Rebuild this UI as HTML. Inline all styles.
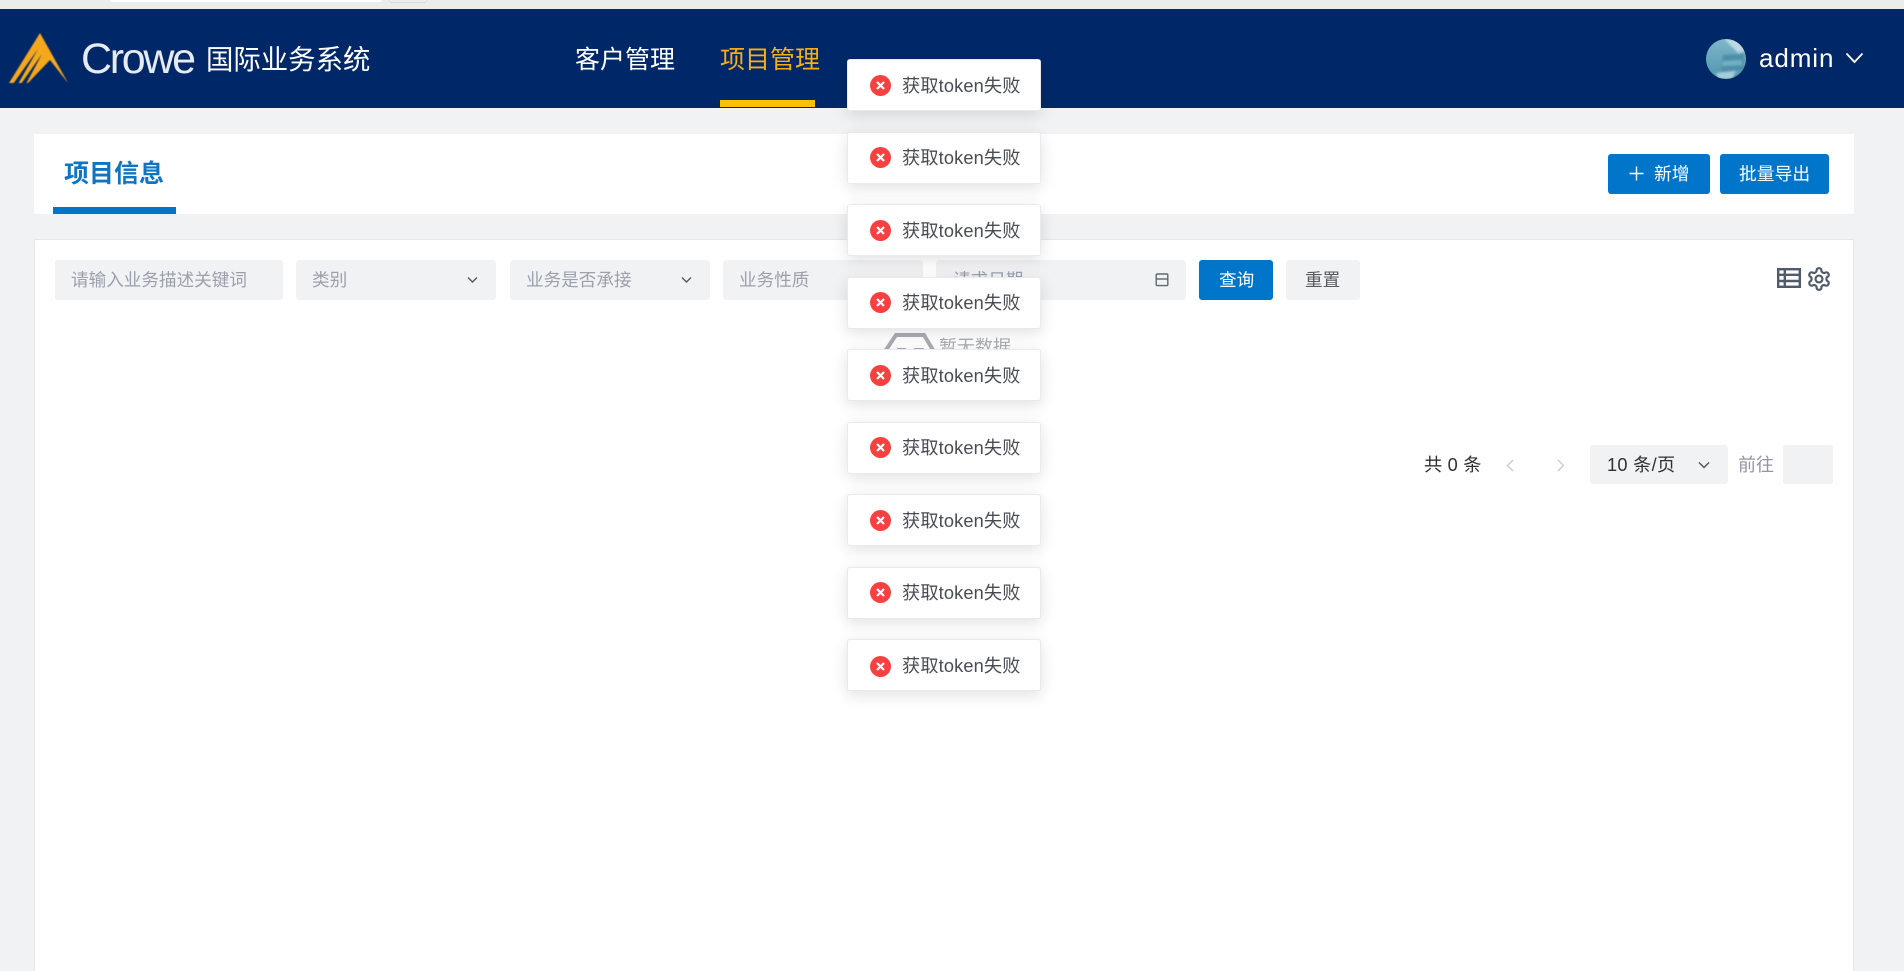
<!DOCTYPE html>
<html lang="zh">
<head>
<meta charset="utf-8">
<title>项目管理</title>
<style>
*{box-sizing:border-box;margin:0;padding:0}
html,body{width:1904px;height:971px;overflow:hidden;background:#f1f2f4;font-family:"Liberation Sans","Noto Sans CJK SC",sans-serif;color:#303133}
#root{position:relative;width:1904px;height:971px;overflow:hidden;background:#f1f2f4}
.abs{position:absolute}
.t{position:absolute;white-space:nowrap;line-height:1}
#strip{left:0;top:0;width:1904px;height:9px;background:#ececec}
#header{left:0;top:9px;width:1904px;height:99px;background:#002868}
#panel{left:34px;top:134px;width:1820px;height:80px;background:#fff}
#card{left:34px;top:239px;width:1820px;height:732px;background:#fff;border:1px solid #e4e7ed;border-bottom:0;border-radius:2px 2px 0 0}
.f{position:absolute;top:260px;height:40px;background:#f1f2f4;border-radius:3px}
.ph{color:#9aa1ac;font-size:17.6px;top:272px}
.btn{position:absolute;top:154px;height:40px;background:#0075c9;border-radius:3px}
.toast{position:absolute;left:847px;width:194px;height:52px;background:#fff;border:1px solid #e8eaf0;border-radius:3px;box-shadow:0 4px 16px rgba(0,0,0,.12)}
.toast svg{position:absolute;left:22px;top:15px}
.toast span{position:absolute;left:54px;top:16px;font-size:18.2px;letter-spacing:.15px;line-height:20px;color:#484c54;white-space:nowrap}
.up svg{top:14px}
.up span{top:15px}
</style>
</head>
<body>
<div id="root">
<div class="abs" id="strip"></div>
<div class="abs" style="left:110px;top:0;width:272px;height:2px;background:#fff;border-radius:0 0 3px 3px"></div>
<div class="abs" style="left:389px;top:-3px;width:38px;height:6px;border:1px solid #ddd;border-radius:3px"></div>
<div class="abs" id="header"></div>

<svg class="abs" style="left:8px;top:32px;filter:blur(.4px)" width="62" height="54" viewBox="0 0 62 54">
<path d="M1 51 L32 1 L60 51 L42 28 L20 51 Z" fill="#f5a81c"/>
<path d="M5 52 L30 17 L10 52 Z" fill="#002868"/>
<path d="M13 52 L34 22 L18 52 Z" fill="#002868"/>
</svg>
<div class="t" style="left:81px;top:38px;font-size:43px;letter-spacing:-2.3px;color:#e6eaf2;font-weight:400">Crowe</div>
<div class="t" style="left:206px;top:46px;font-size:27.4px;color:#fff">国际业务系统</div>
<div class="t" style="left:575px;top:48px;font-size:25px;color:#fff">客户管理</div>
<div class="t" style="left:720px;top:48px;font-size:25px;color:#f8ae14">项目管理</div>
<div class="abs" style="left:720px;top:100px;width:95px;height:7px;background:#fcc000"></div>

<svg class="abs" style="left:1706px;top:39px" width="40" height="40" viewBox="0 0 40 40">
<defs><clipPath id="av"><circle cx="20" cy="20" r="20"/></clipPath>
<linearGradient id="ag" x1="0" y1="0" x2="0" y2="1"><stop offset="0" stop-color="#7fb6c8"/><stop offset="1" stop-color="#4f97ae"/></linearGradient>
<filter id="bl"><feGaussianBlur stdDeviation="1"/></filter></defs>
<g clip-path="url(#av)">
<rect width="40" height="40" fill="url(#ag)"/>
<g filter="url(#bl)">
<path d="M18 0 L40 0 L40 12 L32 14 L24 6 Z" fill="#bcd8e2"/>
<path d="M17 16 L38 15 L38 31 L15 33 Z" fill="#4d8ea8"/>
<path d="M17 22 L36 21 L36 26 L16 27 Z" fill="#72b0c6"/>
<path d="M10 34 L30 32 L26 40 L12 40 Z" fill="#a6cdd8"/>
</g>
</g>
</svg>
<div class="t" style="left:1759px;top:45px;font-size:26px;letter-spacing:.9px;color:#fff">admin</div>
<svg class="abs" style="left:1845px;top:52px" width="19" height="12" viewBox="0 0 19 12"><path d="M1.5 1.5 L9.5 10 L17.5 1.5" fill="none" stroke="#fff" stroke-width="1.8"/></svg>

<div class="abs" id="panel"></div>
<div class="t" style="left:64px;top:162px;font-size:25px;font-weight:700;color:#0d74c6">项目信息</div>
<div class="abs" style="left:53px;top:207px;width:123px;height:7px;background:#0075c9"></div>

<div class="btn" style="left:1608px;width:102px"></div>
<svg class="abs" style="left:1629px;top:166px" width="15" height="15" viewBox="0 0 15 15"><path d="M7.5 0.5V14.5M0.5 7.5H14.5" stroke="#fff" stroke-width="1.4"/></svg>
<div class="t" style="left:1654px;top:166px;font-size:17.8px;color:#fff">新增</div>
<div class="btn" style="left:1720px;width:109px"></div>
<div class="t" style="left:1739px;top:166px;font-size:17.8px;color:#fff">批量导出</div>

<div class="abs" id="card"></div>

<div class="f" style="left:55px;width:228px"></div>
<div class="t ph" style="left:71px">请输入业务描述关键词</div>
<div class="f" style="left:296px;width:200px"></div>
<div class="t ph" style="left:312px">类别</div>
<svg class="abs" style="left:467px;top:276px" width="11" height="8" viewBox="0 0 11 8"><path d="M1 1.5 L5.5 6 L10 1.5" fill="none" stroke="#4f5866" stroke-width="1.4"/></svg>
<div class="f" style="left:510px;width:200px"></div>
<div class="t ph" style="left:526px">业务是否承接</div>
<svg class="abs" style="left:681px;top:276px" width="11" height="8" viewBox="0 0 11 8"><path d="M1 1.5 L5.5 6 L10 1.5" fill="none" stroke="#4f5866" stroke-width="1.4"/></svg>
<div class="f" style="left:723px;width:200px"></div>
<div class="t ph" style="left:739px">业务性质</div>
<div class="f" style="left:936px;width:250px"></div>
<div class="t ph" style="left:953px">请求日期</div>
<svg class="abs" style="left:1155px;top:272px" width="14" height="15" viewBox="0 0 14 15"><rect x="1.2" y="2" width="11.6" height="11.6" rx="1" fill="none" stroke="#5f6775" stroke-width="1.4"/><path d="M1.2 7H12.8" stroke="#5f6775" stroke-width="1.4"/></svg>
<div class="abs" style="left:1199px;top:260px;width:74px;height:40px;background:#0075c9;border-radius:3px"></div>
<div class="t" style="left:1219px;top:272px;font-size:17.6px;color:#fff">查询</div>
<div class="f" style="left:1286px;width:74px"></div>
<div class="t" style="left:1305px;top:272px;font-size:17.6px;color:#55595f">重置</div>

<svg class="abs" style="left:1777px;top:268px" width="24" height="20" viewBox="0 0 24 20"><rect x="1.2" y="1.2" width="21.6" height="17.6" fill="none" stroke="#4f5b6b" stroke-width="2.4"/><path d="M1 6.8H23M1 13H23M7.8 1V19" stroke="#4f5b6b" stroke-width="2.4" fill="none"/></svg>
<svg class="abs" style="left:1806px;top:266px" width="26" height="26" viewBox="0 0 24 24" fill="none" stroke="#4f5b6b" stroke-width="2"><path d="M12.22 2h-.44a2 2 0 0 0-2 2v.18a2 2 0 0 1-1 1.73l-.43.25a2 2 0 0 1-2 0l-.15-.08a2 2 0 0 0-2.73.73l-.22.38a2 2 0 0 0 .73 2.73l.15.1a2 2 0 0 1 1 1.72v.51a2 2 0 0 1-1 1.74l-.15.09a2 2 0 0 0-.73 2.73l.22.38a2 2 0 0 0 2.73.73l.15-.08a2 2 0 0 1 2 0l.43.25a2 2 0 0 1 1 1.73V20a2 2 0 0 0 2 2h.44a2 2 0 0 0 2-2v-.18a2 2 0 0 1 1-1.73l.43-.25a2 2 0 0 1 2 0l.15.08a2 2 0 0 0 2.73-.73l.22-.39a2 2 0 0 0-.73-2.73l-.15-.08a2 2 0 0 1-1-1.74v-.5a2 2 0 0 1 1-1.74l.15-.09a2 2 0 0 0 .73-2.73l-.22-.38a2 2 0 0 0-2.73-.73l-.15.08a2 2 0 0 1-2 0l-.43-.25a2 2 0 0 1-1-1.73V4a2 2 0 0 0-2-2z"/><circle cx="12" cy="12" r="3.2"/></svg>

<svg class="abs" style="left:882px;top:328px" width="56" height="24" viewBox="0 0 56 24"><path d="M4 22 L14 7 L42 7 L51 22" fill="none" stroke="#a9adb5" stroke-width="4"/><path d="M15 21H24M32 21H42" stroke="#a9adb5" stroke-width="2"/></svg>
<div class="t" style="left:939px;top:338px;font-size:18px;color:#a9adb5">暂无数据</div>

<div class="t" style="left:1424px;top:456px;font-size:18.2px;letter-spacing:.2px;color:#303133">共 0 条</div>
<svg class="abs" style="left:1505px;top:458px" width="10" height="15" viewBox="0 0 10 15"><path d="M8 2 L2.5 7.5 L8 13" fill="none" stroke="#c8ccd3" stroke-width="1.4"/></svg>
<svg class="abs" style="left:1556px;top:458px" width="10" height="15" viewBox="0 0 10 15"><path d="M2 2 L7.5 7.5 L2 13" fill="none" stroke="#c8ccd3" stroke-width="1.4"/></svg>
<div class="abs" style="left:1590px;top:445px;width:138px;height:39px;background:#f1f2f4;border-radius:3px"></div>
<div class="t" style="left:1607px;top:456px;font-size:18.2px;letter-spacing:.3px;color:#303133">10 条/页</div>
<svg class="abs" style="left:1698px;top:461px" width="12" height="8" viewBox="0 0 12 8"><path d="M1 1.5 L6 6.5 L11 1.5" fill="none" stroke="#4f5866" stroke-width="1.5"/></svg>
<div class="t" style="left:1738px;top:456px;font-size:18px;color:#8f96a3">前往</div>
<div class="abs" style="left:1783px;top:445px;width:50px;height:39px;background:#f1f2f4;border-radius:3px"></div>

<div class="toast" style="top:59px"><svg width="21" height="21" viewBox="0 0 21 21"><circle cx="10.5" cy="10.5" r="10.5" fill="#f74141"/><path d="M7 7L14 14M14 7L7 14" stroke="#fff" stroke-width="2.2"/></svg><span>获取token失败</span></div>
<div class="toast up" style="top:132px"><svg width="21" height="21" viewBox="0 0 21 21"><circle cx="10.5" cy="10.5" r="10.5" fill="#f74141"/><path d="M7 7L14 14M14 7L7 14" stroke="#fff" stroke-width="2.2"/></svg><span>获取token失败</span></div>
<div class="toast" style="top:204px"><svg width="21" height="21" viewBox="0 0 21 21"><circle cx="10.5" cy="10.5" r="10.5" fill="#f74141"/><path d="M7 7L14 14M14 7L7 14" stroke="#fff" stroke-width="2.2"/></svg><span>获取token失败</span></div>
<div class="toast up" style="top:277px"><svg width="21" height="21" viewBox="0 0 21 21"><circle cx="10.5" cy="10.5" r="10.5" fill="#f74141"/><path d="M7 7L14 14M14 7L7 14" stroke="#fff" stroke-width="2.2"/></svg><span>获取token失败</span></div>
<div class="toast" style="top:349px"><svg width="21" height="21" viewBox="0 0 21 21"><circle cx="10.5" cy="10.5" r="10.5" fill="#f74141"/><path d="M7 7L14 14M14 7L7 14" stroke="#fff" stroke-width="2.2"/></svg><span>获取token失败</span></div>
<div class="toast up" style="top:422px"><svg width="21" height="21" viewBox="0 0 21 21"><circle cx="10.5" cy="10.5" r="10.5" fill="#f74141"/><path d="M7 7L14 14M14 7L7 14" stroke="#fff" stroke-width="2.2"/></svg><span>获取token失败</span></div>
<div class="toast" style="top:494px"><svg width="21" height="21" viewBox="0 0 21 21"><circle cx="10.5" cy="10.5" r="10.5" fill="#f74141"/><path d="M7 7L14 14M14 7L7 14" stroke="#fff" stroke-width="2.2"/></svg><span>获取token失败</span></div>
<div class="toast up" style="top:567px"><svg width="21" height="21" viewBox="0 0 21 21"><circle cx="10.5" cy="10.5" r="10.5" fill="#f74141"/><path d="M7 7L14 14M14 7L7 14" stroke="#fff" stroke-width="2.2"/></svg><span>获取token失败</span></div>
<div class="toast" style="top:639px"><svg style="top:16px" width="21" height="21" viewBox="0 0 21 21"><circle cx="10.5" cy="10.5" r="10.5" fill="#f74141"/><path d="M7 7L14 14M14 7L7 14" stroke="#fff" stroke-width="2.2"/></svg><span>获取token失败</span></div>
</div>
</body>
</html>
